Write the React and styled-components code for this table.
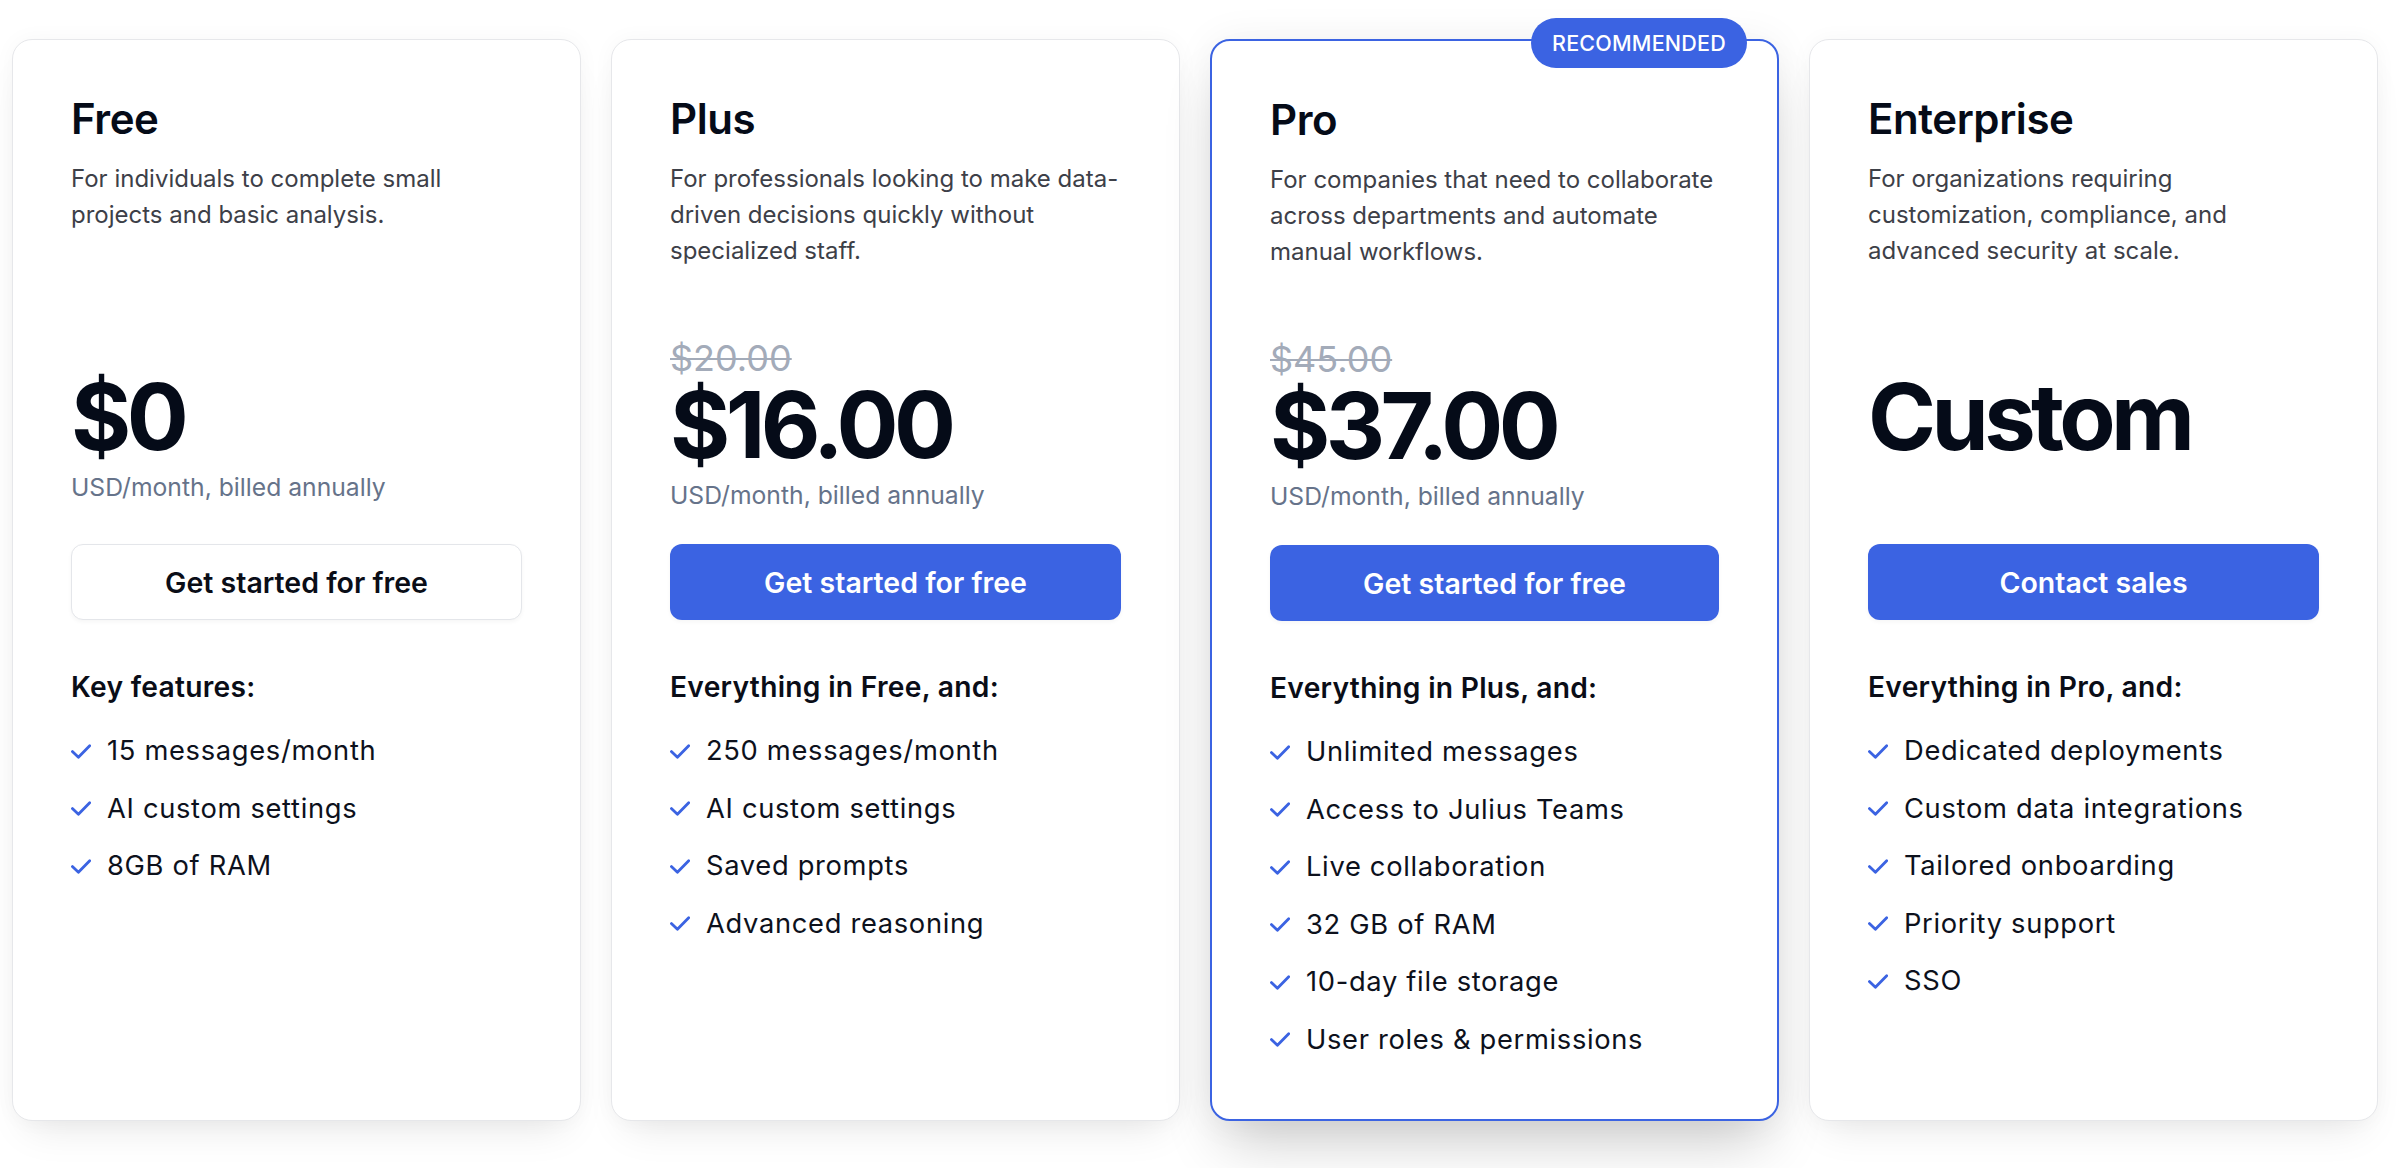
import React from "react";
import styled, { createGlobalStyle } from "styled-components";

const Global = createGlobalStyle`
  html, body { margin: 0; padding: 0; background: #ffffff; }
  body { font-family: "Inter", "Noto Sans", sans-serif; -webkit-font-smoothing: antialiased; }
  * { box-sizing: border-box; }
`;

const BLUE = "#3b63e2";

const Page = styled.div`
  padding: 39px 0 60px 12px;
`;

const Grid = styled.div`
  display: grid;
  grid-template-columns: repeat(4, 569px);
  gap: 30px;
  align-items: stretch;
`;

const Card = styled.div`
  position: relative;
  display: flex;
  flex-direction: column;
  background: #ffffff;
  border-radius: 20px;
  padding: 59px 58px 58px 58px;
  border: ${(p) => (p.$featured ? `2px solid ${BLUE}` : "1px solid #e6e7ea")};
  box-shadow: ${(p) =>
    p.$featured
      ? "0 34px 60px -14px rgba(0,0,0,0.20), 0 0 40px rgba(0,0,0,0.06)"
      : "0 22px 40px -16px rgba(0,0,0,0.10), 0 0 22px rgba(0,0,0,0.035)"};
`;

const Badge = styled.div`
  position: absolute;
  top: -23px;
  right: 30px;
  height: 50px;
  padding: 0 21px;
  border-radius: 25px;
  background: ${BLUE};
  color: #ffffff;
  font-size: 21.5px;
  font-weight: 500;
  letter-spacing: 0.01em;
  display: flex;
  align-items: center;
  text-transform: uppercase;
`;

const Title = styled.h2`
  margin: 0;
  font-size: 42px;
  line-height: 40px;
  font-weight: 600;
  letter-spacing: -0.01em;
  color: #050b18;
`;

const Desc = styled.p`
  margin: 22px 0 0;
  min-height: 108px;
  font-size: 24px;
  line-height: 36px;
  font-weight: 400;
  color: #3d4048;
`;

const PriceBlock = styled.div`
  height: 244px;
  display: flex;
  flex-direction: column;
  justify-content: flex-end;
  padding-bottom: ${(p) => p.$lift || 0}px;
`;

const OldPrice = styled.div`
  font-size: 36px;
  line-height: 38px;
  font-weight: 400;
  color: #a3abb9;
  text-decoration: line-through;
  text-decoration-thickness: 2px;
`;

const Price = styled.div`
  margin-top: 2px;
  font-size: 92px;
  line-height: 92px;
  font-weight: 700;
  letter-spacing: -0.05em;
  color: #050b18;
`;

const Billing = styled.div`
  margin-top: 6px;
  font-size: 24.7px;
  line-height: 36px;
  color: #66738a;
`;

const Button = styled.button`
  margin-top: 31px;
  height: 76px;
  width: 100%;
  border-radius: 12px;
  font-family: inherit;
  font-size: 28.5px;
  font-weight: 600;
  cursor: pointer;
  border: ${(p) => (p.$outline ? "1px solid #e4e6ea" : "none")};
  background: ${(p) => (p.$outline ? "#ffffff" : BLUE)};
  color: ${(p) => (p.$outline ? "#0a0d17" : "#ffffff")};
  box-shadow: 0 2px 4px rgba(0, 0, 0, 0.04);
`;

const FeatureHeading = styled.div`
  margin-top: 49px;
  font-size: 28.2px;
  line-height: 36px;
  font-weight: 600;
  letter-spacing: 0.01em;
  color: #0a0d17;
`;

const FeatureList = styled.ul`
  list-style: none;
  margin: 25px 0 0;
  padding: 0;
  display: flex;
  flex-direction: column;
  gap: 15.6px;
`;

const Feature = styled.li`
  display: flex;
  align-items: center;
  gap: 16px;
  font-size: 27.3px;
  line-height: 42px;
  letter-spacing: 0.025em;
  color: #0d111c;
`;

const CheckIcon = () => (
  <svg width="20" height="15" viewBox="0 0 20 15" fill="none" style={{ flexShrink: 0 }}>
    <path
      d="M1.4 7.6 L7.4 13.3 L18.7 1.7"
      stroke={BLUE}
      strokeWidth="2.8"
      strokeLinecap="round"
      strokeLinejoin="round"
    />
  </svg>
);

const plans = [
  {
    name: "Free",
    desc: "For individuals to complete small projects and basic analysis.",
    price: "$0",
    billing: "USD/month, billed annually",
    lift: 8,
    cta: "Get started for free",
    outline: true,
    heading: "Key features:",
    features: ["15 messages/month", "AI custom settings", "8GB of RAM"],
  },
  {
    name: "Plus",
    desc: "For professionals looking to make data-driven decisions quickly without specialized staff.",
    oldPrice: "$20.00",
    price: "$16.00",
    billing: "USD/month, billed annually",
    lift: 0,
    cta: "Get started for free",
    heading: "Everything in Free, and:",
    features: ["250 messages/month", "AI custom settings", "Saved prompts", "Advanced reasoning"],
  },
  {
    name: "Pro",
    featured: true,
    desc: "For companies that need to collaborate across departments and automate manual workflows.",
    oldPrice: "$45.00",
    price: "$37.00",
    billing: "USD/month, billed annually",
    lift: 0,
    cta: "Get started for free",
    heading: "Everything in Plus, and:",
    features: [
      "Unlimited messages",
      "Access to Julius Teams",
      "Live collaboration",
      "32 GB of RAM",
      "10-day file storage",
      "User roles & permissions",
    ],
  },
  {
    name: "Enterprise",
    desc: "For organizations requiring customization, compliance, and advanced security at scale.",
    price: "Custom",
    lift: 50,
    cta: "Contact sales",
    heading: "Everything in Pro, and:",
    features: [
      "Dedicated deployments",
      "Custom data integrations",
      "Tailored onboarding",
      "Priority support",
      "SSO",
    ],
  },
];

export default function App() {
  return (
    <>
      <Global />
      <Page>
        <Grid>
          {plans.map((p) => (
            <Card key={p.name} $featured={p.featured}>
              {p.featured && <Badge>Recommended</Badge>}
              <Title>{p.name}</Title>
              <Desc>{p.desc}</Desc>
              <PriceBlock $lift={p.lift}>
                {p.oldPrice && <OldPrice>{p.oldPrice}</OldPrice>}
                <Price>{p.price}</Price>
                {p.billing && <Billing>{p.billing}</Billing>}
              </PriceBlock>
              <Button $outline={p.outline}>{p.cta}</Button>
              <FeatureHeading>{p.heading}</FeatureHeading>
              <FeatureList>
                {p.features.map((f) => (
                  <Feature key={f}>
                    <CheckIcon />
                    <span>{f}</span>
                  </Feature>
                ))}
              </FeatureList>
            </Card>
          ))}
        </Grid>
      </Page>
    </>
  );
}
